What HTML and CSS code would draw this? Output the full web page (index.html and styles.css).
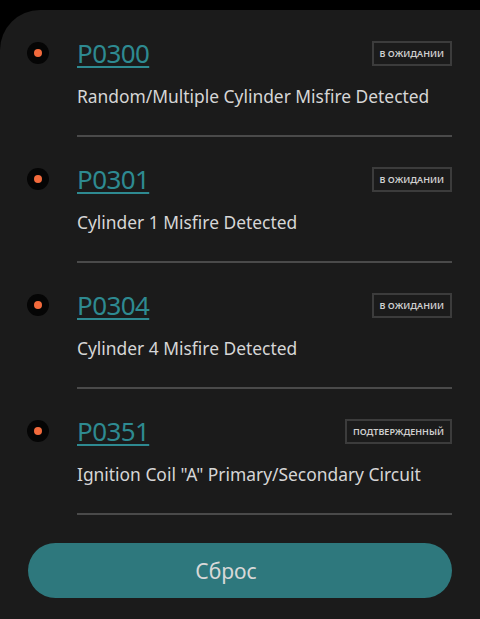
FILE: index.html
```html
<!DOCTYPE html>
<html lang="ru">
<head>
  <meta charset="UTF-8" />
  <meta name="viewport" content="width=device-width, initial-scale=1" />
  <title>Коды ошибок</title>
  <link rel="stylesheet" href="styles.css">
</head>
<body>

  <div class="panel">

    <div class="code-row">
      <span class="dot"></span>
      <div class="code-body">
        <div class="code-head">
          <a class="code" href="#">P0300</a>
          <span class="badge">В ожидании</span>
        </div>
        <p class="desc">Random/Multiple Cylinder Misfire Detected</p>
      </div>
    </div>

    <div class="code-row">
      <span class="dot"></span>
      <div class="code-body">
        <div class="code-head">
          <a class="code" href="#">P0301</a>
          <span class="badge">В ожидании</span>
        </div>
        <p class="desc">Cylinder 1 Misfire Detected</p>
      </div>
    </div>

    <div class="code-row">
      <span class="dot"></span>
      <div class="code-body">
        <div class="code-head">
          <a class="code" href="#">P0304</a>
          <span class="badge">В ожидании</span>
        </div>
        <p class="desc">Cylinder 4 Misfire Detected</p>
      </div>
    </div>

    <div class="code-row">
      <span class="dot"></span>
      <div class="code-body">
        <div class="code-head">
          <a class="code" href="#">P0351</a>
          <span class="badge">Подтвержденный</span>
        </div>
        <p class="desc">Ignition Coil "A" Primary/Secondary Circuit</p>
      </div>
    </div>

    <button class="reset">Сброс</button>
  </div>

</body>
</html>
```

FILE: styles.css
```css
html, body {
  height: 100%;
}

body {
  margin: 0;
  background: #000;
  font-family: "Noto Sans", "Open Sans", sans-serif;
  color: #d4d4d4;
  overflow: hidden;
}

.panel {
  margin-top: 10px;
  min-height: 100%;
  background: #1b1b1b;
  border-top-left-radius: 40px;
  padding: 1px 28px 0 27px;
  box-sizing: border-box;
}

.code-row {
  display: flex;
  align-items: flex-start;
  gap: 28px;
}

.dot {
  flex: none;
  width: 22px;
  height: 22px;
  margin-top: 31px;
  border-radius: 50%;
  background: #050505;
  display: flex;
  align-items: center;
  justify-content: center;
}

.dot::after {
  content: "";
  width: 8px;
  height: 8px;
  border-radius: 50%;
  background: #f26a3c;
}

.code-body {
  flex: 1;
  padding: 26px 0 26px;
  border-bottom: 2px solid #4a4a4a;
}

.code-head {
  display: flex;
  align-items: center;
  justify-content: space-between;
  height: 32px;
}

.code {
  font-size: 26px;
  line-height: 32px;
  letter-spacing: -0.6px;
  color: #2e8a91;
  text-decoration: underline;
  text-decoration-thickness: 2px;
  text-underline-offset: 3px;
}

.badge {
  border: 2px solid #3c3c3c;
  padding: 0 6px;
  height: 21px;
  line-height: 21px;
  font-size: 9px;
  font-weight: 600;
  text-transform: uppercase;
  color: #cfcfcf;
}

.desc {
  margin: 14px 0 0;
  font-size: 17.4px;
  line-height: 26px;
  color: #d6d6d6;
}

.reset {
  display: block;
  width: calc(100% - 1px);
  height: 55px;
  margin-top: 28px;
  margin-left: 1px;
  padding: 0 28px 0 0;
  border: none;
  border-radius: 28px;
  background: #2e787d;
  color: #d8d8d8;
  font-family: inherit;
  font-size: 21px;
  cursor: pointer;
}
```
